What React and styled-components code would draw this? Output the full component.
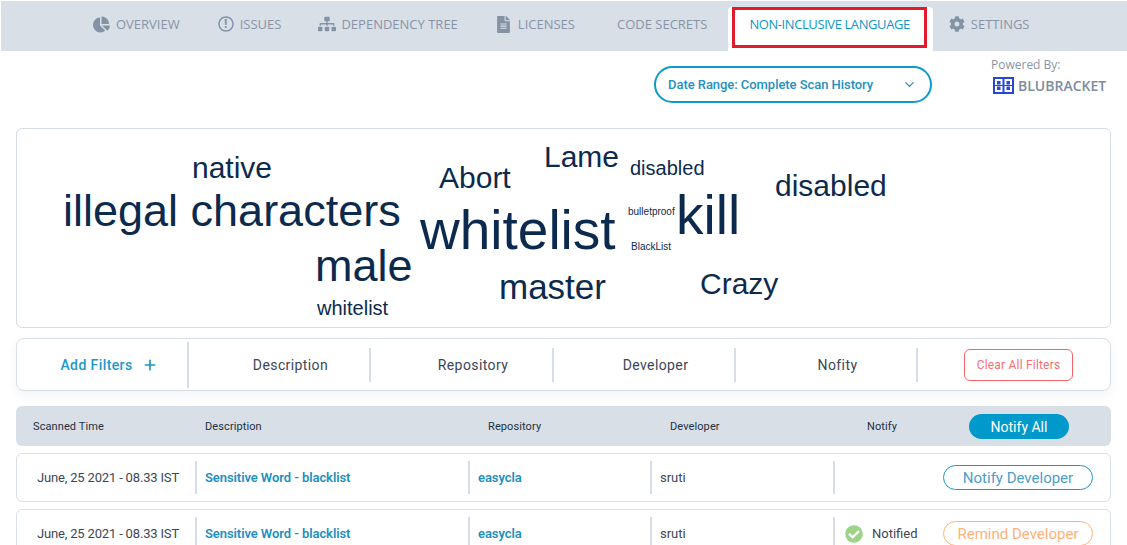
import React from "react";
import styled, { createGlobalStyle } from "styled-components";
import { FaChartPie, FaSitemap, FaFileAlt, FaCog, FaCheckCircle, FaRegCircle } from "react-icons/fa";
import { FiChevronDown, FiPlus } from "react-icons/fi";

const Global = createGlobalStyle`
  html, body { margin: 0; padding: 0; height: 545px; overflow: hidden; background: #fff; }
  body { font-family: "Roboto", "Open Sans", sans-serif; color: #2f3b4a; }
  * { box-sizing: border-box; }
`;

const words = [
  { text: "illegal characters", x: 46, y: 59, size: 45 },
  { text: "native", x: 175, y: 24, size: 30 },
  { text: "Abort", x: 422, y: 34, size: 30 },
  { text: "Lame", x: 527, y: 13, size: 30 },
  { text: "disabled", x: 613, y: 29, size: 20 },
  { text: "disabled", x: 758, y: 42, size: 30 },
  { text: "whitelist", x: 403, y: 74, size: 55 },
  { text: "bulletproof", x: 611, y: 78, size: 10 },
  { text: "kill", x: 659, y: 59, size: 55 },
  { text: "BlackList", x: 614, y: 113, size: 10 },
  { text: "male", x: 298, y: 114, size: 45 },
  { text: "master", x: 482, y: 140, size: 35 },
  { text: "Crazy", x: 683, y: 140, size: 30 },
  { text: "whitelist", x: 300, y: 169, size: 20 },
];

const rows = [
  { notified: false },
  { notified: true },
];

const Nav = styled.nav`
  display: flex;
  align-items: stretch;
  height: 50px;
  margin: 1px 0 0 1px;
  padding-left: 73px;
  background: #d9dfe7;
`;

const Tab = styled.div`
  display: flex;
  align-items: center;
  gap: ${(p) => p.$gap ?? 6}px;
  margin-left: ${(p) => p.$shift ?? 0}px;
  padding: 0 19px 4px;
  font-family: "Open Sans", sans-serif;
  font-size: 13px;
  white-space: nowrap;
  color: #8794a8;
  svg { color: #8492a6; }
`;

const ActiveTab = styled(Tab)`
  position: relative;
  margin: 6px 0 0 2px;
  padding: 0 23px 10px 21px;
  background: #fff;
  letter-spacing: -0.41px;
  color: #0e96c6;
  border-radius: 4px 4px 0 0;
  &::after {
    content: "";
    position: absolute;
    left: 4px;
    right: 6px;
    top: 0;
    bottom: 3px;
    border: 3px solid #e21a2c;
  }
`;

const CircleMark = styled.span`
  position: relative;
  display: flex;
  color: #8492a6;
  &::after {
    content: "!";
    position: absolute;
    inset: 0;
    text-align: center;
    font: bold 12px/16px "Open Sans", sans-serif;
  }
`;

const Tools = styled.div`
  display: flex;
  justify-content: flex-end;
  height: 77px;
  padding: 5px 21px 0 0;
`;

const DatePill = styled.div`
  display: flex;
  align-items: center;
  justify-content: space-between;
  width: 278px;
  height: 37px;
  margin: 10px 59px 0 0;
  padding: 0 13px 0 12px;
  border: 2px solid #0e9aca;
  border-radius: 19px;
  font-size: 13px;
  font-weight: 500;
  letter-spacing: -0.05px;
  color: #2391bf;
`;

const Powered = styled.div`
  display: flex;
  flex-direction: column;
  width: 115px;
  font-family: "Open Sans", sans-serif;
  font-size: 12px;
  color: #8a96a8;
`;

const Brand = styled.div`
  display: flex;
  align-items: center;
  gap: 4px;
  margin: 3px 0 0 2px;
  font-size: 14px;
  font-weight: 600;
  white-space: nowrap;
  color: #7e8ca0;
  svg { flex-shrink: 0; }
`;

const Main = styled.main`
  display: flex;
  flex-direction: column;
  padding: 0 16px;
`;

const Cloud = styled.section`
  position: relative;
  height: 200px;
  border: 1px solid #d6dde5;
  border-radius: 6px;
`;

const Word = styled.span`
  position: absolute;
  left: ${(p) => p.$x}px;
  top: ${(p) => p.$y}px;
  font-family: "Liberation Sans", Arial, sans-serif;
  font-size: ${(p) => p.$size}px;
  line-height: 1;
  white-space: nowrap;
  color: #0c2a4d;
`;

const FilterBar = styled.section`
  display: grid;
  grid-template-columns: 172px 182px 183px 182px 182px 1fr;
  align-items: center;
  height: 53px;
  margin-top: 10px;
  border: 1px solid #d9dfe7;
  border-radius: 8px;
  box-shadow: 0 4px 10px rgba(60, 90, 130, 0.07);
`;

const FilterCell = styled.div`
  display: flex;
  align-items: center;
  justify-content: center;
  height: ${(p) => (p.$tall ? 46 : 34)}px;
  padding-left: 23px;
  border-right: 2px solid #d6dde8;
  font-size: 14px;
  letter-spacing: 0.4px;
  color: #3b4757;
`;

const AddFilter = styled(FilterCell)`
  gap: 9px;
  padding-left: 14px;
  font-weight: 500;
  color: #1e97c9;
`;

const ClearCell = styled.div`
  display: flex;
  justify-content: center;
  padding-left: 9px;
`;

const ClearButton = styled.button`
  width: 109px;
  height: 32px;
  padding: 0;
  border: 1px solid #f8636a;
  border-radius: 6px;
  background: #fff;
  font: 12px "Roboto", sans-serif;
  letter-spacing: 0.2px;
  color: #fb6d73;
`;

const TableHead = styled.div`
  display: grid;
  grid-template-columns: 172px 283px 182px 197px 1fr;
  align-items: center;
  height: 40px;
  margin-top: 15px;
  padding-left: 17px;
  background: #d9dfe7;
  border-radius: 6px;
  font-size: 11px;
  letter-spacing: 0.1px;
  color: #22303f;
`;

const NotifyHead = styled.div`
  display: grid;
  grid-template-columns: 102px 100px;
  align-items: center;
`;

const NotifyAll = styled.button`
  height: 25px;
  padding: 2px 0 0;
  border: 0;
  border-radius: 13px;
  background: #0099cc;
  font: 14px "Roboto", sans-serif;
  color: #fff;
`;

const Row = styled.div`
  display: grid;
  grid-template-columns: 178px 273px 182px 183px 1fr;
  align-items: center;
  height: 49px;
  margin-top: 7px;
  border: 1px solid #d9dfe7;
  border-radius: 6px;
  font-size: 13px;
  color: #3b4757;
`;

const Cell = styled.div`
  display: flex;
  align-items: center;
  height: 33px;
  padding-left: 8px;
  border-left: 2px solid #d6dde8;
  font-weight: ${(p) => (p.$link ? 600 : 400)};
  letter-spacing: ${(p) => (p.$link ? "-0.08px" : "0")};
  color: ${(p) => (p.$link ? "#1e8fc0" : "inherit")};
`;

const TimeCell = styled.div`
  text-align: center;
  padding-left: 4px;
  letter-spacing: -0.17px;
`;

const NotifyCell = styled(Cell)`
  justify-content: space-between;
  padding: 0 17px 0 10px;
`;

const Status = styled.span`
  display: flex;
  align-items: center;
  gap: 9px;
  svg { color: #9bd484; }
`;

const ActionButton = styled.button`
  width: 150px;
  height: 25px;
  margin-left: auto;
  padding: 0;
  border: 1px solid ${(p) => (p.$remind ? "#ffb27a" : "#1e97c9")};
  border-radius: 13px;
  background: #fff;
  font: 15px "Roboto", sans-serif;
  color: ${(p) => (p.$remind ? "#ffb27a" : "#4b9fcb")};
`;

const Logo = () => (
  <svg width="21" height="17" viewBox="0 0 21 17">
    <rect width="21" height="17" fill="#2347d6" />
    <rect x="2" y="2" width="7.5" height="13" fill="#fff" />
    <rect x="11.5" y="2" width="7.5" height="13" fill="#fff" />
    <rect x="4" y="4" width="3.5" height="3.5" fill="#2347d6" />
    <rect x="13.5" y="4" width="3.5" height="3.5" fill="#2347d6" />
    <rect x="4" y="9.5" width="3.5" height="3.5" fill="#2347d6" />
    <rect x="13.5" y="9.5" width="3.5" height="3.5" fill="#2347d6" />
    <rect x="0" y="8" width="21" height="1" fill="#2347d6" />
  </svg>
);

export default function App() {
  return (
    <>
      <Global />
      <Nav>
        <Tab><FaChartPie size={17} />OVERVIEW</Tab>
        <Tab><CircleMark><FaRegCircle size={16} /></CircleMark>ISSUES</Tab>
        <Tab $shift={-1} $gap={5}><FaSitemap size={18} />DEPENDENCY TREE</Tab>
        <Tab $shift={-1}><FaFileAlt size={17} />LICENSES</Tab>
        <Tab $shift={4}>CODE SECRETS</Tab>
        <ActiveTab>NON-INCLUSIVE LANGUAGE</ActiveTab>
        <Tab $shift={-3}><FaCog size={16} />SETTINGS</Tab>
      </Nav>
      <Tools>
        <DatePill>
          Date Range: Complete Scan History
          <FiChevronDown size={15} />
        </DatePill>
        <Powered>
          Powered By:
          <Brand><Logo />BLUBRACKET</Brand>
        </Powered>
      </Tools>
      <Main>
        <Cloud>
          {words.map((w, i) => (
            <Word key={i} $x={w.x} $y={w.y} $size={w.size}>{w.text}</Word>
          ))}
        </Cloud>
        <FilterBar>
          <AddFilter $tall>Add Filters <FiPlus size={16} strokeWidth={2.5} /></AddFilter>
          <FilterCell>Description</FilterCell>
          <FilterCell>Repository</FilterCell>
          <FilterCell>Developer</FilterCell>
          <FilterCell>Nofity</FilterCell>
          <ClearCell><ClearButton>Clear All Filters</ClearButton></ClearCell>
        </FilterBar>
        <TableHead>
          <div>Scanned Time</div>
          <div>Description</div>
          <div>Repository</div>
          <div>Developer</div>
          <NotifyHead>
            <div>Notify</div>
            <NotifyAll>Notify All</NotifyAll>
          </NotifyHead>
        </TableHead>
        {rows.map((r, i) => (
          <Row key={i}>
            <TimeCell>June, 25 2021 - 08.33 IST</TimeCell>
            <Cell $link>Sensitive Word - blacklist</Cell>
            <Cell $link>easycla</Cell>
            <Cell>sruti</Cell>
            <NotifyCell>
              {r.notified && <Status><FaCheckCircle size={18} />Notified</Status>}
              <ActionButton $remind={r.notified}>
                {r.notified ? "Remind Developer" : "Notify Developer"}
              </ActionButton>
            </NotifyCell>
          </Row>
        ))}
      </Main>
    </>
  );
}
